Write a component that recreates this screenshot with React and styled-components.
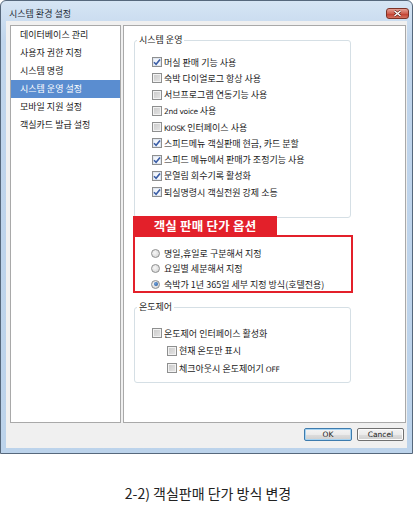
import React from 'react';
import styled, { createGlobalStyle } from 'styled-components';

const GlobalStyle = createGlobalStyle`
  body {
    margin: 0;
    background: #fff;
    font-family: "Noto Sans CJK KR", "Noto Sans", sans-serif;
  }
`;

const Page = styled.div`
  width: 416px;
  height: 507px;
  display: flex;
  flex-direction: column;
`;

const Window = styled.div`
  width: 413px;
  height: 454px;
  box-sizing: border-box;
  border: 1px solid #56687c;
  border-radius: 6px 6px 0 0;
  background: linear-gradient(#d6e5f4, #c0d5ec 40px, #bcd3eb);
  display: flex;
  flex-direction: column;
`;

const TitleBar = styled.div`
  height: 20px;
  display: flex;
  justify-content: space-between;
  align-items: flex-end;
  padding: 0 3px 2px 8px;
`;

const Title = styled.span`
  font-size: 9px;
  line-height: 12px;
  color: #1e2a36;
  margin-bottom: -1px;
`;

const CloseButton = styled.div`
  width: 23px;
  height: 11px;
  box-sizing: border-box;
  border: 1px solid #7d3226;
  border-radius: 3px;
  background: linear-gradient(#e4a197, #cf5f4f 50%, #c0392a 51%, #d4705f);
  display: flex;
  align-items: center;
  justify-content: center;
`;

const Client = styled.div`
  flex: 1;
  margin: 0 5px 5px;
  background: #f0f0f0;
  display: flex;
  flex-direction: column;
  padding: 4px 1px 7px 4px;
`;

const Body = styled.div`
  height: 398px;
  display: flex;
  gap: 2px;
`;

const List = styled.div`
  width: 111px;
  box-sizing: border-box;
  background: #fff;
  border: 1px solid #a9a9a9;
`;

const ListItem = styled.div`
  height: 18px;
  line-height: 18px;
  padding-left: 9px;
  font-size: 9px;
  color: ${p => (p.$selected ? '#fff' : '#1a1a1a')};
  background: ${p => (p.$selected ? '#5a8dd0' : 'transparent')};
`;

const Panel = styled.div`
  width: 283px;
  box-sizing: border-box;
  background: #fff;
  border: 1px solid #a9a9a9;
  padding: 8px 0 0 10px;
`;

const Group = styled.fieldset`
  margin: ${p => p.$mt || 0}px 0 0 0;
  padding: 0;
  width: 217px;
  box-sizing: border-box;
  min-width: 0;
  border: 1px solid #d5dfe5;
  border-radius: 3px;
`;

const Legend = styled.legend`
  margin-left: 2px;
  padding: 0 2px;
  font-size: 9px;
  line-height: 12px;
  color: #1a1a1a;
`;

const Rows = styled.div`
  padding: ${p => p.$pt}px 0 ${p => p.$pb}px 17px;
`;

const Row = styled.div`
  height: ${p => p.$h}px;
  display: flex;
  align-items: center;
  gap: 2px;
  padding-left: ${p => p.$indent || 0}px;
  font-size: 9px;
  color: #1a1a1a;
  white-space: nowrap;
`;

const Small = styled.span`
  font-family: "DejaVu Sans", "Liberation Sans", sans-serif;
  font-size: 7.5px;
  letter-spacing: -0.3px;
  margin-right: 2px;
`;

const Box = styled.span`
  width: 10px;
  height: 10px;
  flex: none;
  box-sizing: border-box;
  border: 1px solid #8e8f8f;
  background: ${p =>
    p.$checked
      ? 'linear-gradient(135deg, #eef2f8, #fbfcfe)'
      : 'linear-gradient(135deg, #c9c9c9, #e6e6e6)'};
  box-shadow: inset 0 0 0 1px ${p => (p.$checked ? '#dfe6f0' : '#f2f2f2')};
  display: flex;
  align-items: center;
  justify-content: center;
`;

const Radio = styled.span`
  width: 9px;
  height: 9px;
  flex: none;
  box-sizing: border-box;
  margin-right: 2px;
  border: 1px solid #8e8f8f;
  border-radius: 50%;
  background: radial-gradient(circle at 40% 40%, #f7f7f7, #cfcfcf);
  display: flex;
  align-items: center;
  justify-content: center;
  &::after {
    content: '';
    display: ${p => (p.$checked ? 'block' : 'none')};
    width: 4px;
    height: 4px;
    border-radius: 50%;
    background: radial-gradient(circle at 40% 40%, #6fa2dc, #1c4f93);
  }
`;

const RedLabel = styled.div`
  width: 144px;
  height: 19px;
  margin: -2px 0 0 -1px;
  background: #e3202a;
  color: #fff;
  font-size: 12.5px;
  font-weight: 700;
  line-height: 19px;
  text-align: center;
  letter-spacing: 0.2px;
`;

const RedBox = styled.div`
  width: 220px;
  height: 58px;
  margin-left: -1px;
  box-sizing: border-box;
  border: 2px solid #e3202a;
  padding: 8px 0 0 16px;
`;

const Footer = styled.div`
  margin-top: 5px;
  height: 13px;
  display: flex;
  justify-content: flex-end;
  gap: 5px;
  padding-right: 2px;
`;

const Button = styled.div`
  width: ${p => p.$w}px;
  height: 13px;
  box-sizing: border-box;
  border: 1px solid ${p => (p.$default ? '#3d7bad' : '#707070')};
  border-radius: 2px;
  background: linear-gradient(#f4f4f4, #ebebeb 50%, #dddddd 51%, #cfcfcf);
  box-shadow: inset 0 0 0 1px ${p => (p.$default ? '#a6d3f2' : '#fcfcfc')};
  font-family: "DejaVu Sans", "Liberation Sans", sans-serif;
  font-size: 7.5px;
  line-height: 11px;
  text-align: center;
  color: #1a1a1a;
`;

const Caption = styled.div`
  flex: 1;
  display: flex;
  align-items: center;
  justify-content: center;
  padding-top: 24px;
  font-size: 14px;
  color: #222;
`;

const Check = () => (
  <svg width="8" height="8" viewBox="0 0 8 8">
    <path d="M1 4.2 L3.1 6.3 L7 1.4" fill="none" stroke="#3a5da6" strokeWidth="1.6" />
  </svg>
);

const CheckRow = ({ checked, indent, h, children }) => (
  <Row $h={h} $indent={indent}>
    <Box $checked={checked}>{checked && <Check />}</Box>
    <span>{children}</span>
  </Row>
);

const menu = ['데이터베이스 관리', '사용자 권한 지정', '시스템 명령', '시스템 운영 설정', '모바일 지원 설정', '객실카드 발급 설정'];

const options = [
  { checked: true, label: '머실 판매 기능 사용' },
  { checked: false, label: '숙박 다이얼로그 항상 사용' },
  { checked: false, label: '서브프로그램 연동기능 사용' },
  { checked: false, label: <><Small>2nd voice</Small>사용</> },
  { checked: false, label: <><Small>KIOSK</Small>인터페이스 사용</> },
  { checked: true, label: '스피드메뉴 객실판매 현금, 카드 분할' },
  { checked: true, label: '스피드 메뉴에서 판매가 조정기능 사용' },
  { checked: true, label: '문열림 회수기록 활성화' },
  { checked: true, label: '퇴실명령시 객실전원 강제 소등' },
];

const prices = ['명일,휴일로 구분해서 지정', '요일별 세분해서 지정', '숙박가 1년 365일 세부 지정 방식(호텔전용)'];

export default function App() {
  return (
    <Page>
      <GlobalStyle />
      <Window>
        <TitleBar>
          <Title>시스템 환경 설정</Title>
          <CloseButton>
            <svg width="9" height="7" viewBox="0 0 9 7">
              <path d="M1.5 1 L7.5 6 M7.5 1 L1.5 6" stroke="#5a1a12" strokeWidth="2.6" />
              <path d="M1.5 1 L7.5 6 M7.5 1 L1.5 6" stroke="#fff" strokeWidth="1.5" />
            </svg>
          </CloseButton>
        </TitleBar>
        <Client>
          <Body>
            <List>
              {menu.map((m, i) => (
                <ListItem key={m} $selected={i === 3}>{m}</ListItem>
              ))}
            </List>
            <Panel>
              <Group>
                <Legend>시스템 운영</Legend>
                <Rows $pt={8} $pb={17}>
                  {options.map((o, i) => (
                    <CheckRow key={i} checked={o.checked} h={16.25}>{o.label}</CheckRow>
                  ))}
                </Rows>
              </Group>
              <RedLabel>객실 판매 단가 옵션</RedLabel>
              <RedBox>
                {prices.map((p, i) => (
                  <Row key={p} $h={15.5}>
                    <Radio $checked={i === 2} />
                    <span>{p}</span>
                  </Row>
                ))}
              </RedBox>
              <Group $mt={8}>
                <Legend>온도제어</Legend>
                <Rows $pt={11} $pb={5}>
                  <CheckRow h={17.5}>온도제어 인터페이스 활성화</CheckRow>
                  <CheckRow h={17.5} indent={15}>현재 온도만 표시</CheckRow>
                  <CheckRow h={17.5} indent={15}>체크아웃시 온도제어기 <Small>OFF</Small></CheckRow>
                </Rows>
              </Group>
            </Panel>
          </Body>
          <Footer>
            <Button $w={48} $default>OK</Button>
            <Button $w={47}>Cancel</Button>
          </Footer>
        </Client>
      </Window>
      <Caption>2-2) 객실판매 단가 방식 변경</Caption>
    </Page>
  );
}
